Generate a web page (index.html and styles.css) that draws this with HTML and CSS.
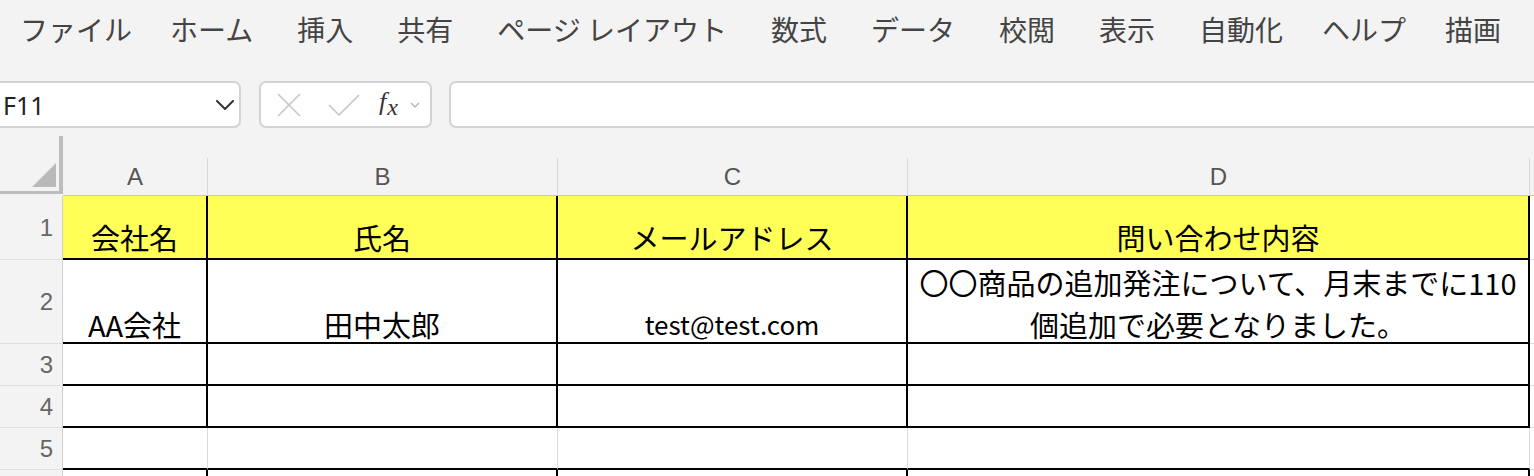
FILE: index.html
```html
<!DOCTYPE html>
<html lang="ja">
<head>
<meta charset="utf-8">
<title>Excel</title>
<link rel="stylesheet" href="styles.css">
</head>
<body>
<nav class="menu">
  <span class="mi">ファイル</span>
  <span class="mi mi--tight">ホーム</span>
  <span class="mi">挿入</span>
  <span class="mi">共有</span>
  <span class="mi">ページ レイアウト</span>
  <span class="mi">数式</span>
  <span class="mi">データ</span>
  <span class="mi">校閲</span>
  <span class="mi">表示</span>
  <span class="mi">自動化</span>
  <span class="mi mi--tight2">ヘルプ</span>
  <span class="mi mi--tight2">描画</span>
</nav>

<div class="fbar">
  <div class="namebox">
    <span class="ref">F11</span>
    <svg class="chev" width="18" height="10" viewBox="0 0 18 10"><path d="M1 1L9 9L17 1" fill="none" stroke="#333" stroke-width="2" stroke-linecap="round" stroke-linejoin="round"/></svg>
  </div>
  <div class="fbtns">
    <svg class="ic-x" width="24" height="24" viewBox="0 0 24 24"><path d="M1 1L23 23M23 1L1 23" fill="none" stroke="#c6c6c6" stroke-width="1.6"/></svg>
    <svg class="ic-ok" width="32" height="22" viewBox="0 0 32 22"><path d="M1 11L11 21L31 1" fill="none" stroke="#c6c6c6" stroke-width="1.6"/></svg>
    <span class="fx"><span class="fx-f">f</span><span class="fx-x">x</span></span>
    <svg class="ic-dd" width="10" height="6" viewBox="0 0 10 6"><path d="M1 1L5 5L9 1" fill="none" stroke="#aaa" stroke-width="1.2"/></svg>
  </div>
  <div class="finput"></div>
</div>

<div class="sheet">
  <div class="corner"><svg width="24" height="24" viewBox="0 0 24 24"><polygon points="24,0 24,24 0,24" fill="#b9b9b9"/></svg></div>
  <div class="ch">A</div>
  <div class="ch">B</div>
  <div class="ch">C</div>
  <div class="ch">D</div>
  <div class="ch ch--e"></div>

  <div class="rh">1</div>
  <div class="c c--head"><span class="t">会社名</span></div>
  <div class="c c--head"><span class="t">氏名</span></div>
  <div class="c c--head"><span class="t">メールアドレス</span></div>
  <div class="c c--head"><span class="t">問い合わせ内容</span></div>
  <div class="c c--e"></div>

  <div class="rh">2</div>
  <div class="c c--r2"><span class="t">AA会社</span></div>
  <div class="c c--r2"><span class="t">田中太郎</span></div>
  <div class="c c--r2"><span class="t t--mail">test@test.com</span></div>
  <div class="c c--r2"><span class="t">〇〇商品の追加発注について、月末までに110<br>個追加で必要となりました。</span></div>
  <div class="c c--e"></div>

  <div class="rh">3</div>
  <div class="c"></div><div class="c"></div><div class="c"></div><div class="c"></div>
  <div class="c c--e"></div>

  <div class="rh">4</div>
  <div class="c"></div><div class="c"></div><div class="c"></div><div class="c"></div>
  <div class="c c--e"></div>

  <div class="rh">5</div>
  <div class="c c--light"></div><div class="c c--light"></div><div class="c c--light"></div><div class="c c--light"></div>
  <div class="c c--e"></div>

  <div class="rh rh--last"></div>
  <div class="c c--last"></div><div class="c c--last"></div><div class="c c--last"></div><div class="c c--last"></div>
  <div class="c c--e c--last"></div>
</div>
</body>
</html>
```

FILE: styles.css
```css
html, body {
  margin: 0;
  padding: 0;
}
body {
  width: 1534px;
  height: 476px;
  overflow: hidden;
  background: #f3f3f3;
  font-family: "Noto Sans CJK JP", "Noto Sans", sans-serif;
}

/* ribbon tabs */
.menu {
  display: flex;
  gap: 44px;
  height: 58px;
  padding-left: 20px;
  font-size: 28px;
  line-height: 58px;
  color: #444;
  white-space: nowrap;
}
.mi--tight { margin-left: -6px; }
.mi--tight2 { margin-left: -5px; }

/* formula bar */
.fbar {
  display: flex;
  height: 47px;
  margin-top: 23px;
}
.namebox,
.fbtns,
.finput {
  box-sizing: border-box;
  height: 47px;
  background: #fff;
  border: 2px solid #d3d3d3;
  border-radius: 7px;
}
.namebox {
  width: 253px;
  margin-left: -12px;
  display: flex;
  align-items: center;
  justify-content: space-between;
  padding: 0 5px 0 13px;
}
.ref {
  font-family: "Noto Sans", sans-serif;
  font-size: 25px;
  color: #222;
}
.fbtns {
  width: 173px;
  margin-left: 18px;
  display: flex;
  align-items: center;
  padding-left: 16px;
}
.ic-ok { margin-left: 27px; }
.fx {
  margin-left: 19px;
  font-family: "Liberation Serif", serif;
  font-style: italic;
  font-size: 26px;
  line-height: 26px;
  color: #333;
}
.fx-x {
  vertical-align: -5px;
  font-size: 24px;
  margin-left: 1px;
}
.ic-dd { margin-left: 12px; }
.finput {
  flex: 1;
  margin-left: 17px;
  margin-right: -20px;
}

/* grid */
.sheet {
  margin-top: 8px;
  display: grid;
  grid-template-columns: 63px 145px 350px 350px 622px 1fr;
  grid-template-rows: 60px 64px 84px 42px 42px 42px 6px;
}
.corner {
  box-sizing: border-box;
  height: 58px;
  border-right: 4px solid #bdbdbd;
  border-bottom: 3px solid #bdbdbd;
  display: flex;
  justify-content: flex-end;
  align-items: flex-end;
  padding: 0 3px 4px 0;
}
.corner svg { display: block; }
.ch {
  align-self: end;
  box-sizing: border-box;
  height: 38px;
  border-right: 1px solid #d8d8d8;
  border-bottom: 1px solid #c6c6c6;
  font-family: "Liberation Sans", "Noto Sans", sans-serif;
  font-size: 24px;
  line-height: 37px;
  color: #555;
  text-align: center;
}
.ch--e { border-right: 0; }
.rh {
  box-sizing: border-box;
  border-right: 1px solid #cfcfcf;
  border-bottom: 1px solid #dedede;
  display: flex;
  align-items: center;
  justify-content: flex-end;
  padding-right: 9px;
  font-family: "Liberation Sans", "Noto Sans", sans-serif;
  font-size: 24px;
  color: #666;
}
.rh--last { border-bottom: 0; }
.c {
  box-sizing: border-box;
  min-width: 0;
  background: #fff;
  border-right: 2px solid #000;
  border-bottom: 2px solid #000;
  display: flex;
  align-items: flex-end;
  justify-content: center;
  text-align: center;
  font-size: 29px;
  line-height: 42px;
  color: #000;
  white-space: nowrap;
}
.c--head { background: #ffff58; }
.c--r2 .t { margin-bottom: -3px; }
.t--mail { font-size: 26px; }
.c--light { border-right: 1px solid #dcdcdc; }
.c--e {
  border-right: 0;
  border-bottom: 1px solid #dcdcdc;
}
.c--last { border-bottom: 0; }
```
